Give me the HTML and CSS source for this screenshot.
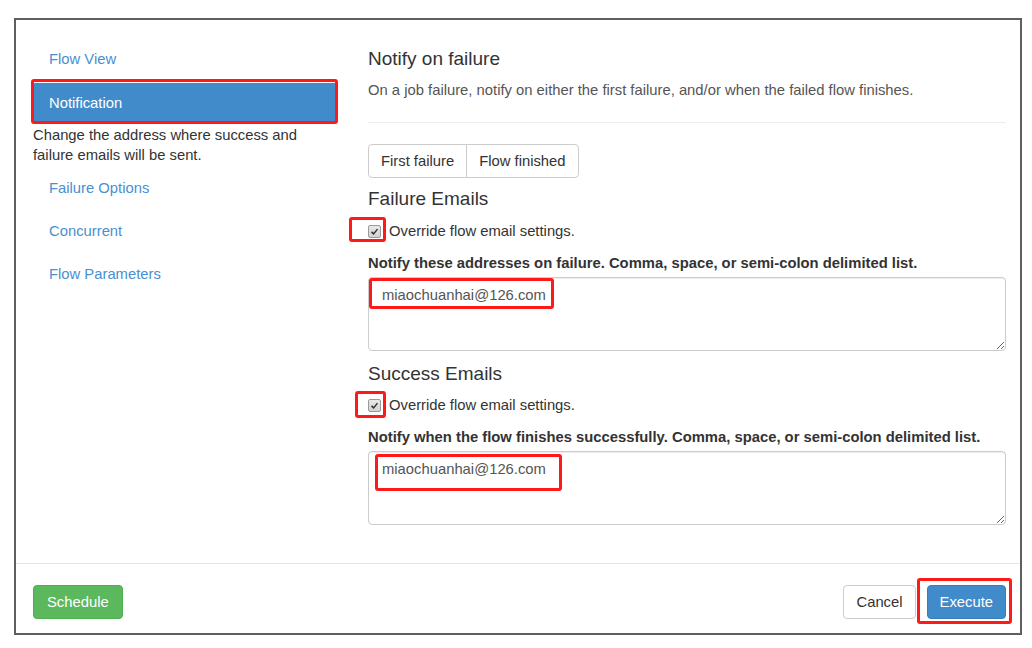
FILE: index.html
```html
<!DOCTYPE html>
<html lang="en">
<head>
    <meta charset="UTF-8">
    <title>Execute Flow - Notification</title>
    <link rel="stylesheet" href="styles.css">
</head>
<body>
    <div class="modal">
        <div class="modal-body">
            <ul class="side-nav">
                <li><a href="#">Flow View</a></li>
                <li class="active"><a href="#">Notification</a></li>
                <li class="side-help">Change the address where success and failure emails will be sent.</li>
                <li><a href="#">Failure Options</a></li>
                <li><a href="#">Concurrent</a></li>
                <li><a href="#">Flow Parameters</a></li>
            </ul>

            <div class="panel">
                <h4 class="first">Notify on failure</h4>
                <p class="lead-text">On a job failure, notify on either the first failure, and/or when the failed flow finishes.</p>
                <hr>
                <div class="btn-group">
                    <button type="button" class="btn">First failure</button>
                    <button type="button" class="btn">Flow finished</button>
                </div>

                <h4 class="section">Failure Emails</h4>
                <label class="check-row">
                    <span class="check">
                        <svg viewBox="0 0 12 12" width="9" height="9"><path d="M2 6.5 L4.8 9.2 L10 2.8" fill="none" stroke="#333" stroke-width="2"/></svg>
                    </span>
                    Override flow email settings.
                </label>
                <div class="field-label">Notify these addresses on failure. Comma, space, or semi-colon delimited list.</div>
                <textarea class="email-box">miaochuanhai@126.com</textarea>

                <h4 class="section second">Success Emails</h4>
                <label class="check-row tight">
                    <span class="check">
                        <svg viewBox="0 0 12 12" width="9" height="9"><path d="M2 6.5 L4.8 9.2 L10 2.8" fill="none" stroke="#333" stroke-width="2"/></svg>
                    </span>
                    Override flow email settings.
                </label>
                <div class="field-label">Notify when the flow finishes successfully. Comma, space, or semi-colon delimited list.</div>
                <textarea class="email-box">miaochuanhai@126.com</textarea>
            </div>
        </div>

        <div class="modal-footer">
            <button type="button" class="btn btn-success">Schedule</button>
            <div class="footer-right">
                <button type="button" class="btn btn-default">Cancel</button>
                <button type="button" class="btn btn-primary">Execute</button>
            </div>
        </div>
    </div>

    <!-- red annotation boxes drawn over the screenshot -->
    <div class="mark mark-nav"></div>
    <div class="mark mark-check1"></div>
    <div class="mark mark-mail1"></div>
    <div class="mark mark-check2"></div>
    <div class="mark mark-mail2"></div>
    <div class="mark mark-exec"></div>
</body>
</html>
```

FILE: styles.css
```css
body {
    margin: 0;
    font-family: "Liberation Sans", Arial, sans-serif;
    font-size: 14.8px;
    line-height: 20px;
    color: #333;
    background: #fff;
    position: relative;
    min-height: 648px;
}

.modal {
    margin: 18px 0 0 14px;
    width: 1008px;
    box-sizing: border-box;
    border: 2px solid #5f5f5f;
    background: #fff;
}

.modal-body {
    display: flex;
    gap: 31px;
    padding: 19px 14px 38px 17px;
}

/* left navigation */
.side-nav {
    list-style: none;
    margin: 0;
    padding: 0;
    width: 304px;
    flex-shrink: 0;
}

.side-nav li {
    margin-top: 3px;
}

.side-nav li:first-child {
    margin-top: 0;
}

.side-nav li.active {
    margin-top: 4px;
}

.side-nav a {
    display: block;
    padding: 10px 16px;
    color: #4a8fd0;
    text-decoration: none;
    border-radius: 2px;
}

.side-nav .active a {
    background-color: #428bca;
    color: #fff;
}

.side-nav .side-help {
    margin: 2px 0 0;
    padding: 0;
    color: #333;
}

/* right panel */
.panel {
    flex: 1;
    min-width: 0;
}

h4 {
    font-size: 19px;
    font-weight: normal;
    line-height: 20px;
    margin: 11px 0 0;
    color: #333;
}

h4.first {
    margin-top: 10px;
}

h4.second {
    margin-top: 13px;
}

.lead-text {
    margin: 11px 0 0;
    color: #555;
}

hr {
    border: 0;
    border-top: 1px solid #eee;
    margin: 22px 0 21px;
}

.btn {
    font-family: inherit;
    font-size: 14.8px;
    line-height: 20px;
    padding: 6px 12px;
    border: 1px solid transparent;
    border-radius: 4px;
    cursor: pointer;
}

.btn-group {
    display: inline-flex;
}

.btn-group .btn {
    background: #fff;
    color: #333;
    border-color: #ccc;
}

.btn-group .btn:first-child {
    border-radius: 4px 0 0 4px;
}

.btn-group .btn:last-child {
    border-radius: 0 4px 4px 0;
    margin-left: -1px;
}

.check-row {
    display: flex;
    align-items: center;
    margin-top: 12px;
    color: #333;
}

.check-row.tight {
    margin-top: 11px;
}

.check {
    display: inline-flex;
    align-items: center;
    justify-content: center;
    width: 11px;
    height: 11px;
    border: 1px solid #9a9a9a;
    border-radius: 2px;
    background: linear-gradient(#e8e8e8, #d2d2d2);
    margin-right: 8px;
}

.field-label {
    font-weight: bold;
    margin-top: 12px;
}

.email-box {
    display: block;
    width: 100%;
    height: 74px;
    box-sizing: border-box;
    margin-top: 4px;
    padding: 7px 13px;
    border: 1px solid #ccc;
    border-radius: 4px;
    box-shadow: inset 0 1px 1px rgba(0, 0, 0, 0.075);
    font-family: inherit;
    font-size: 14.8px;
    line-height: 20px;
    color: #555;
    resize: vertical;
}

/* footer */
.modal-footer {
    display: flex;
    justify-content: space-between;
    border-top: 1px solid #e5e5e5;
    padding: 21px 14px 14px 17px;
}

.footer-right {
    display: flex;
    gap: 11px;
}

.btn-success {
    background-color: #5cb85c;
    border-color: #4cae4c;
    color: #fff;
    padding: 6px 13px;
}

.btn-default {
    background-color: #fff;
    border-color: #ccc;
    color: #333;
}

.btn-primary {
    background-color: #428bca;
    border-color: #357ebd;
    color: #fff;
}

/* annotations */
.mark {
    position: absolute;
    box-sizing: border-box;
    border: 3px solid #ff1a1a;
    border-radius: 3px;
    pointer-events: none;
}

.mark-nav { left: 31px; top: 79px; width: 307px; height: 45px; }
.mark-check1 { left: 349px; top: 217px; width: 37px; height: 25px; }
.mark-mail1 { left: 369px; top: 278px; width: 185px; height: 31px; }
.mark-check2 { left: 355px; top: 391px; width: 31px; height: 27px; }
.mark-mail2 { left: 375px; top: 454px; width: 187px; height: 37px; }
.mark-exec { left: 917px; top: 578px; width: 95px; height: 46px; }
```
